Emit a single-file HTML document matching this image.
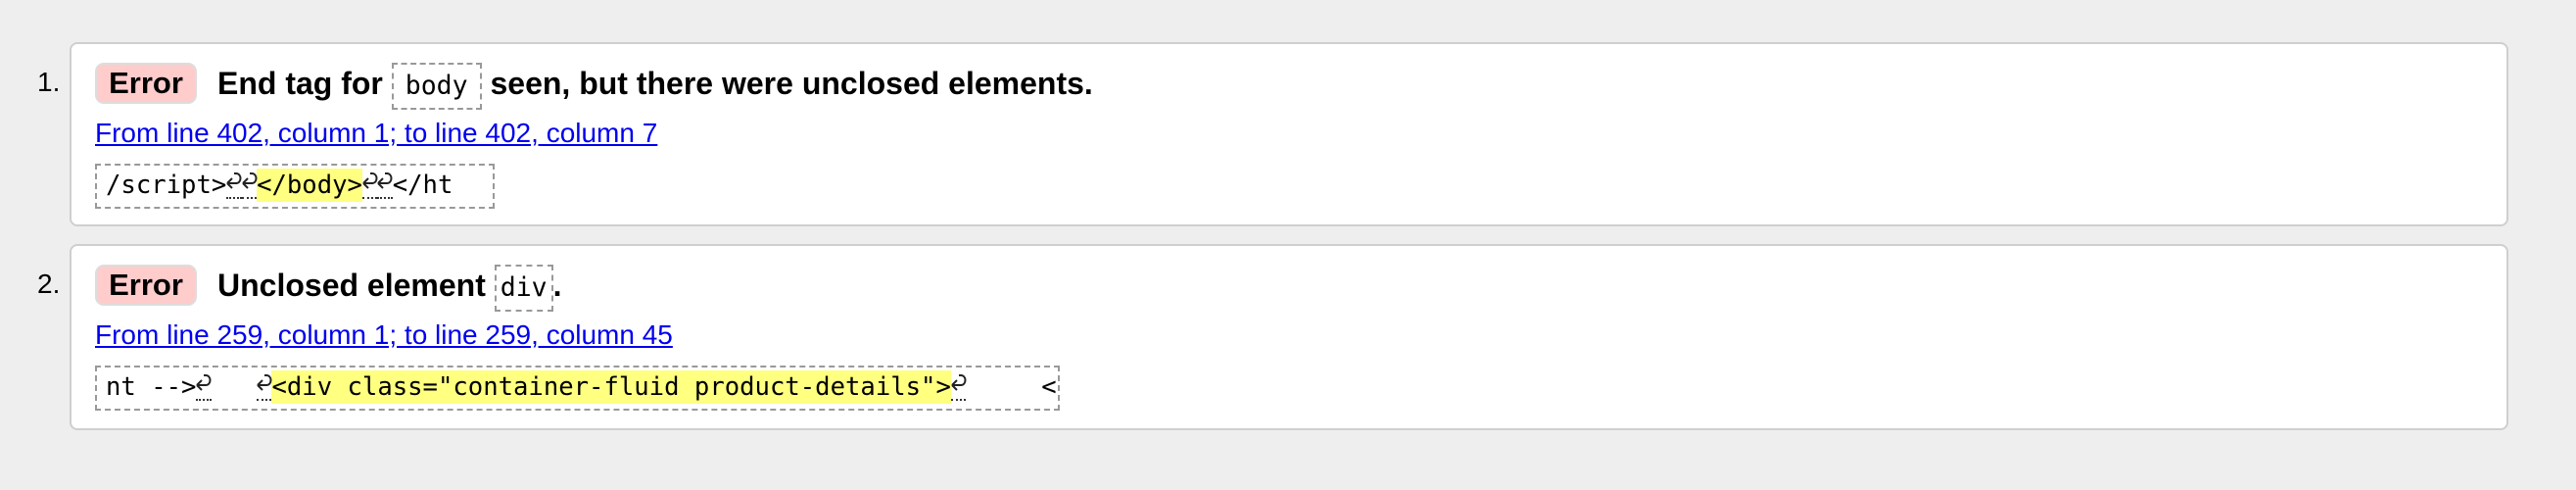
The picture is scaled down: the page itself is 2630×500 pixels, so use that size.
<!DOCTYPE html>
<html><head><meta charset="utf-8"><style>
body{margin:0;width:2630px;height:500px;background:#eeeeee;font-family:"Liberation Sans",Arial,sans-serif;position:relative;overflow:hidden}
.card{position:absolute;left:71px;width:2490px;background:#fff;border:2px solid #cfcfcf;border-radius:8px;box-sizing:border-box}
.abs{position:absolute;white-space:pre}
.num{font-size:28px;color:#000}
.badge{position:absolute;background:#fcc;border:2px solid #ddd;border-radius:9px;box-sizing:border-box;width:104px;height:42px;font-weight:bold;font-size:31px;text-align:center;line-height:38px;color:#000}
.title{font-weight:bold;font-size:32px;color:#000}
.cbox{display:inline-block;border:2px dashed #999;font-family:"DejaVu Sans Mono","Liberation Mono",monospace;font-weight:normal;font-size:26.5px;padding:0 12px;line-height:44px;vertical-align:middle}
a{color:#0000ee;text-decoration:underline;font-size:28px}
.code{position:absolute;border:2px dashed #999;box-sizing:border-box;font-family:"DejaVu Sans Mono","Liberation Mono",monospace;font-size:25.6px;white-space:pre;padding:0 0 0 9px;line-height:41px;height:46px}
.hl{background:#ffff80;display:inline-block;line-height:34px}
.r{display:inline-block;width:15.4px;height:30px;border-bottom:2px dotted #333;vertical-align:-6px;position:relative}
.r svg{position:absolute;left:-1px;top:2px}
</style></head><body>
<svg width="0" height="0" style="position:absolute"><defs><symbol id="ar" viewBox="0 0 18 22"><path d="M2 14 H11 C17 14 17 4 11 4 H9 M2 14 L7 9 M2 14 L7 19" fill="none" stroke="#222" stroke-width="2"/></symbol></defs></svg>
<div class="card" style="top:43px;height:188px"></div>
<div class="card" style="top:249px;height:190px"></div>

<div class="abs num" style="left:38px;top:64px;line-height:40px">1.</div>
<div class="badge" style="left:97px;top:64px">Error</div>
<div class="abs title" style="left:222px;top:59px;line-height:52px">End tag for <span class="cbox">body</span> seen, but there were unclosed elements.</div>
<div class="abs" style="left:97px;top:120px"><a>From line 402, column 1; to line 402, column 7</a></div>
<div class="code" style="left:97px;top:167px;width:408px">/script><span class="r"><svg width="18" height="22"><use href="#ar"/></svg></span><span class="r"><svg width="18" height="22"><use href="#ar"/></svg></span><span class="hl">&lt;/body&gt;</span><span class="r"><svg width="18" height="22"><use href="#ar"/></svg></span><span class="r"><svg width="18" height="22"><use href="#ar"/></svg></span>&lt;/ht</div>

<div class="abs num" style="left:38px;top:270px;line-height:40px">2.</div>
<div class="badge" style="left:97px;top:270px">Error</div>
<div class="abs title" style="left:222px;top:265px;line-height:52px">Unclosed element <span class="cbox" style="padding:0 4px">div</span>.</div>
<div class="abs" style="left:97px;top:326px"><a>From line 259, column 1; to line 259, column 45</a></div>
<div class="code" style="left:97px;top:373px;width:985px">nt --&gt;<span class="r"><svg width="18" height="22"><use href="#ar"/></svg></span>   <span class="r"><svg width="18" height="22"><use href="#ar"/></svg></span><span class="hl">&lt;div class="container-fluid product-details"&gt;</span><span class="r"><svg width="18" height="22"><use href="#ar"/></svg></span>     &lt;</div>
</body></html>
